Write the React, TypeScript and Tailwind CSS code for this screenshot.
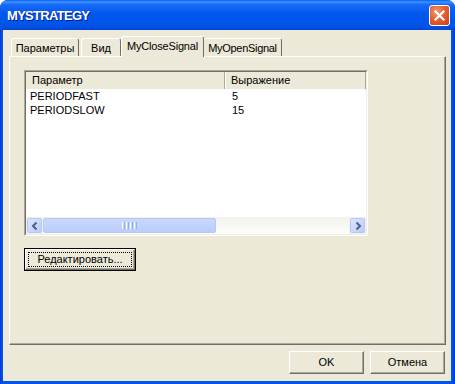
import React from "react";

function Chevron({ dir }: { dir: "left" | "right" }) {
  return (
    <svg width="8" height="8" viewBox="0 0 8 8">
      {dir === "left" ? (
        <path d="M5.5 0.5 L2 4 L5.5 7.5" fill="none" stroke="#4D6185" strokeWidth="2" />
      ) : (
        <path d="M2.5 0.5 L6 4 L2.5 7.5" fill="none" stroke="#4D6185" strokeWidth="2" />
      )}
    </svg>
  );
}

function ScrollBtn({ dir }: { dir: "left" | "right" }) {
  return (
    <div className="w-[17px] h-[17px] p-px bg-[#F3F1EC]">
      <div className="w-full h-full rounded-[2px] border border-[#B5C7F3] bg-[linear-gradient(135deg,#DCE6FE,#BACBF8)] flex items-center justify-center">
        <Chevron dir={dir} />
      </div>
    </div>
  );
}

function ClassicButton({
  children,
  className,
  focused,
}: {
  children: React.ReactNode;
  className: string;
  focused?: boolean;
}) {
  if (focused) {
    return (
      <div className={`${className} border border-black bg-[#ECE9D8]`}>
        <div className="w-full h-full border-t border-l border-white border-r border-b border-r-[#716F64] border-b-[#716F64] shadow-[inset_-1px_-1px_0_#ACA899] p-[2px]">
          <div className="w-full h-full border border-dotted border-black flex items-center justify-center">
            {children}
          </div>
        </div>
      </div>
    );
  }
  return (
    <div className={`${className} bg-[#ECE9D8] border-t border-l border-white border-r border-b border-r-[#716F64] border-b-[#716F64] shadow-[inset_-1px_-1px_0_#ACA899] flex items-center justify-center`}>
      {children}
    </div>
  );
}

export default function App() {
  return (
    <div className="w-[455px] h-[384px] flex flex-col rounded-t-[8px] overflow-hidden bg-[linear-gradient(90deg,#0831D9_0px,#0055EA_2px,#0055EA_452px,#0831D9_455px)] font-['Liberation_Sans',Arial,sans-serif] text-[11px] text-black">
      {/* Title bar */}
      <div className="h-[30px] shrink-0 flex items-center justify-between pl-[7px] pr-[5px] bg-[linear-gradient(180deg,#0A5DFF_0%,#3D95FF_7%,#1A6CF8_14%,#0058EE_45%,#0055E8_85%,#0046D6_100%)]">
        <span className="text-white font-bold text-[13px] tracking-[-0.7px] leading-none [text-shadow:1px_1px_0_#0A1A8C] pt-[1px]">
          MYSTRATEGY
        </span>
        <div className="w-[21px] h-[21px] rounded-[3px] border border-white bg-[radial-gradient(circle_at_35%_30%,#F29A78_0%,#E5602F_45%,#C8401A_100%)] flex items-center justify-center">
          <svg width="11" height="11" viewBox="0 0 11 11">
            <path d="M1.5 1.5 L9.5 9.5 M9.5 1.5 L1.5 9.5" stroke="white" strokeWidth="2.2" strokeLinecap="square" />
          </svg>
        </div>
      </div>

      {/* Client area */}
      <div className="flex-1 flex flex-col bg-[#ECE9D8] ml-[3px] mr-[4px] mb-[3px] pl-[6px] pr-[5px] pt-[6px]">
        {/* Tabs */}
        <div className="h-[20px] shrink-0 flex items-end pl-[2px]">
          <div className="w-[68px] h-[18px] rounded-t-[3px] border-t border-l border-white border-r border-r-[#716F64] flex items-center justify-center pt-px">
            Параметры
          </div>
          <div className="ml-[2px] w-[40px] h-[18px] rounded-t-[3px] border-t border-l border-white border-r border-r-[#716F64] flex items-center justify-center pt-px">
            Вид
          </div>
          <div className="relative z-10 -mb-px w-[83px] h-[21px] bg-[#ECE9D8] rounded-t-[3px] border-t border-l border-white border-r border-r-[#716F64] flex items-center justify-center pb-[2px] tracking-[-0.2px]">
            MyCloseSignal
          </div>
          <div className="w-[78px] h-[18px] rounded-t-[3px] border-t border-white border-r border-r-[#716F64] flex items-center justify-center pt-px tracking-[-0.3px]">
            MyOpenSignal
          </div>
        </div>

        {/* Panel */}
        <div className="h-[289px] shrink-0 border-t border-l border-white border-r border-b border-r-[#716F64] border-b-[#716F64] shadow-[inset_-1px_-1px_0_#ACA899] pl-[14px] pt-[13px]">
          {/* List view */}
          <div className="w-[344px] h-[166px] border border-t-[#ACA899] border-l-[#ACA899] border-r-white border-b-white">
            <div className="w-full h-full border border-t-[#716F64] border-l-[#716F64] border-r-[#F1EFE2] border-b-[#F1EFE2] flex flex-col bg-white">
              {/* Header */}
              <div className="h-[17px] shrink-0 flex bg-[#ECE9D8]">
                <div className="w-[199px] h-full border-r border-r-[#ACA899] pl-[6px] flex items-center">
                  Параметр
                </div>
                <div className="flex-1 h-full border-l border-l-white border-r border-r-[#ACA899] pl-[5px] flex items-center">
                  Выражение
                </div>
              </div>
              {/* Rows */}
              <div className="flex-1 flex flex-col">
                <div className="h-[14px] flex items-center">
                  <div className="w-[200px] pl-[4px]">PERIODFAST</div>
                  <div className="pl-[6px]">5</div>
                </div>
                <div className="h-[14px] flex items-center">
                  <div className="w-[200px] pl-[4px]">PERIODSLOW</div>
                  <div className="pl-[6px]">15</div>
                </div>
              </div>
              {/* Scrollbar */}
              <div className="h-[17px] shrink-0 flex bg-[linear-gradient(180deg,#F3F1EC,#FEFEFB)]">
                <ScrollBtn dir="left" />
                <div className="flex-1 flex py-px">
                  <div className="w-[173px] h-full rounded-[2px] border border-[#B5C9F6] bg-[linear-gradient(180deg,#C9D8FC,#B9CDFB)] flex items-center justify-center gap-px">
                    <div className="w-px h-[7px] bg-white" />
                    <div className="w-px h-[7px] bg-[#8CB0F8]" />
                    <div className="w-px h-[7px] bg-white" />
                    <div className="w-px h-[7px] bg-[#8CB0F8]" />
                    <div className="w-px h-[7px] bg-white" />
                    <div className="w-px h-[7px] bg-[#8CB0F8]" />
                    <div className="w-px h-[7px] bg-white" />
                    <div className="w-px h-[7px] bg-[#8CB0F8]" />
                  </div>
                </div>
                <ScrollBtn dir="right" />
              </div>
            </div>
          </div>

          {/* Edit button */}
          <div className="mt-[12px]">
            <ClassicButton className="w-[112px] h-[23px]" focused>
              Редактировать...
            </ClassicButton>
          </div>
        </div>

        {/* Footer */}
        <div className="flex justify-end gap-[6px] pt-[6px] pr-[1px]">
          <ClassicButton className="w-[75px] h-[23px]">OK</ClassicButton>
          <ClassicButton className="w-[75px] h-[23px]">Отмена</ClassicButton>
        </div>
      </div>
    </div>
  );
}
